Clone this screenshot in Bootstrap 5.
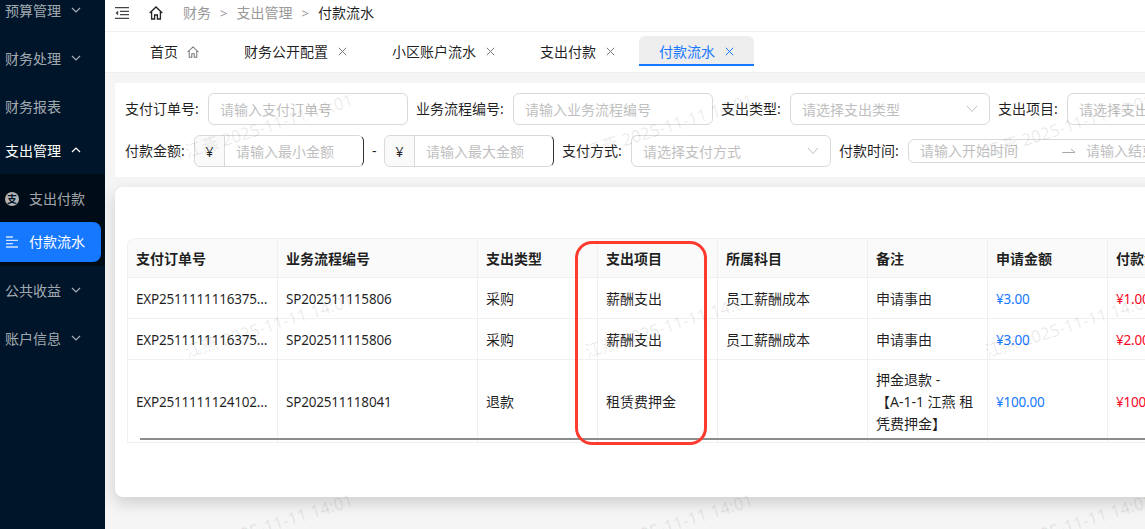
<!DOCTYPE html>
<html lang="zh-CN">
<head>
<meta charset="utf-8">
<title>付款流水</title>
<link href="https://cdn.jsdelivr.net/npm/bootstrap@5.3.0/dist/css/bootstrap.min.css" rel="stylesheet">
<style>
html,body{height:100%;overflow:hidden}
body{font-family:"Noto Sans","Noto Sans CJK SC",sans-serif;font-size:14px;line-height:22px;color:rgba(0,0,0,.88);background:#f5f5f5}
.shell{height:529px;width:1145px;overflow:hidden}
.side{width:105px;background:#001529;color:rgba(255,255,255,.65);overflow:hidden}
.side-first{margin-top:-14px}
.side-item{height:48px;padding:2px 24px 0 5px}
.side-item.open{height:44px;color:#fff;padding-top:0;padding-bottom:2px}
.side-item svg{width:10px;height:6px;flex:none;margin-bottom:3px}
.side-sub{background:#000c17;padding:5px 4px 4px 0;height:92px}
.sub-item{height:40px;padding-left:5px;gap:10px;margin-bottom:3px;border-radius:0 8px 8px 0}
.sub-item.on{background:#1677ff;color:#fff;margin-bottom:0}
.sub-icon{width:14px;height:14px;border-radius:50%;background:#b5b5b5;color:#001529;font-size:10px;line-height:14px;text-align:center;flex:none;font-weight:700}
.main-col{min-width:0;position:relative;overflow:hidden}
.topbar{height:32px;background:#fff;border-bottom:1px solid #f0f0f0;padding:0 0 6px 10px}
.crumb-home{margin-left:20px;margin-right:20px}
.crumb{color:#999}
.crumb-sep{color:#999;width:25.5px;text-align:center;font-size:13px}
.crumb-now{color:rgba(0,0,0,.88)}
.tabbar{height:41px;background:#fff;border-bottom:1px solid #eee;padding-left:25px;padding-top:4px;gap:5px;flex-wrap:nowrap}
.tab-link{height:30px;padding:3px 20px 0;color:rgba(0,0,0,.88);border-radius:6px 6px 0 0;border-bottom:2px solid transparent;white-space:nowrap}
.tab-link:hover{color:rgba(0,0,0,.88)}
.tab-link.current,.tab-link.current:hover{background:#eee;color:#1677ff;border-bottom-color:#1677ff;margin-left:-1px}
.tab-link svg{margin-left:10px;flex:none}
.tab-link svg.home-mini{margin-left:9px}
.pane{padding:10px 0 0 10px;width:1240px}
.filters{background:#fff;padding:10px;height:94px;gap:10px;margin-bottom:10px}
.f-row{gap:8px;height:32px;flex-wrap:nowrap}
.f-label{white-space:nowrap;flex:none}
.w-l4{width:61px}.w-l5{width:75px}.w-l6{width:89px}
.filters .form-control,.filters .form-select,.filters .input-group-text{font-size:14px;height:32px;border-color:#d9d9d9;border-radius:6px;min-height:0;color:rgba(0,0,0,.88);box-shadow:none}
.filters .form-control::placeholder{color:#bfbfbf}
.f-w200{width:200px;flex:none}
.filters .form-control{padding:4px 11px}
.filters .form-select{color:#bfbfbf;padding:4px 11px;background-size:12px 8px;background-position:right 11px center;background-image:url("data:image/svg+xml,%3csvg xmlns='http://www.w3.org/2000/svg' viewBox='0 0 12 8'%3e%3cpath fill='none' stroke='%23bfbfbf' d='M1 1l5 5.5L11 1'/%3e%3c/svg%3e")}
.filters .input-group{width:170px;flex:none;flex-wrap:nowrap}
.filters .input-group-text{width:31px;padding:0;justify-content:center;background:#fafafa;border-radius:6px 0 0 6px}
.filters .input-group .form-control{border-right-color:#333;border-radius:0 6px 6px 0;min-width:0}
.dash{width:4px;text-align:center;flex:none}
.range{width:300px;flex:none;border:1px solid #d9d9d9;border-radius:6px;padding:0 11px;gap:10px}
.range input{border:0;outline:0;padding:0;width:132px;font-size:14px;background:transparent}
.range input::placeholder{color:#bfbfbf}
.sheet{position:relative;background:#fff;height:310px;border-radius:8px;border:0;box-shadow:0 6px 16px rgba(0,0,0,.16);padding:51px 0 0 12px}
.grid-wrap{position:relative;height:205px;overflow:hidden;border:1px solid #f0f0f0;border-right:0;border-top-left-radius:8px}
.pay-table{table-layout:fixed;width:1100px;margin:0;border-collapse:separate;border-spacing:0}
.pay-table th,.pay-table td{padding:0 8px;border:0;border-right:1px solid #f0f0f0;border-bottom:1px solid #f0f0f0;vertical-align:middle;font-size:14px;line-height:22px;color:rgba(0,0,0,.88);box-shadow:none}
.pay-table th{background:#fafafa;font-weight:700;height:39px;padding-top:1px}
.pay-table .row-s td{height:41px;padding-top:1px}
.pay-table .row-l td{height:85px}
.pay-table td.latin{font-size:13.5px;letter-spacing:-.2px}
.amt-b{color:#1677ff!important}
.amt-r{color:#f5071f!important}
.scroll-line{position:absolute;left:12px;right:0;top:199px;height:2px;background:#8c8c8c}
.red-mark{position:absolute;left:460px;top:54px;width:132px;height:204px;border:3px solid #ff3b30;border-radius:17px;pointer-events:none}
.wm-layer{position:absolute;left:-36px;top:26px;display:grid;grid-template-columns:repeat(3,400px);grid-auto-rows:200px;pointer-events:none;z-index:5}
.wm-layer span{display:flex;align-items:center;justify-content:center;color:rgba(0,0,0,.09);font-size:17px;transform:rotate(-17.5deg);white-space:nowrap}
</style>
</head>
<body>
<div class="shell d-flex">
  <aside class="side flex-shrink-0">
    <div class="side-item side-first d-flex align-items-center justify-content-between">预算管理<svg viewBox="0 0 10 6"><path d="M1 1l4 4 4-4" fill="none" stroke="currentColor" stroke-width="1.2"/></svg></div>
    <div class="side-item d-flex align-items-center justify-content-between">财务处理<svg viewBox="0 0 10 6"><path d="M1 1l4 4 4-4" fill="none" stroke="currentColor" stroke-width="1.2"/></svg></div>
    <div class="side-item d-flex align-items-center">财务报表</div>
    <div class="side-item open d-flex align-items-center justify-content-between">支出管理<svg viewBox="0 0 10 6"><path d="M1 5l4-4 4 4" fill="none" stroke="currentColor" stroke-width="1.2"/></svg></div>
    <div class="side-sub">
      <div class="sub-item d-flex align-items-center"><span class="sub-icon">支</span>支出付款</div>
      <div class="sub-item on d-flex align-items-center"><svg width="14" height="12" viewBox="0 0 14 12" class="flex-shrink-0"><path d="M1 1h7M1 4.3h12M1 7.6h7M1 11h12" stroke="#cfe2ff" stroke-width="1.3" fill="none"/></svg>付款流水</div>
    </div>
    <div class="side-item d-flex align-items-center justify-content-between">公共收益<svg viewBox="0 0 10 6"><path d="M1 1l4 4 4-4" fill="none" stroke="currentColor" stroke-width="1.2"/></svg></div>
    <div class="side-item d-flex align-items-center justify-content-between">账户信息<svg viewBox="0 0 10 6"><path d="M1 1l4 4 4-4" fill="none" stroke="currentColor" stroke-width="1.2"/></svg></div>
  </aside>
  <main class="main-col flex-grow-1">
    <div class="topbar d-flex align-items-center">
      <svg width="14" height="12" viewBox="0 0 14 12"><path d="M0 .7h14M5 4.3h9M5 7.7h9M0 11.3h14" stroke="#444" stroke-width="1.2" fill="none"/><path d="M3.2 3.6L.6 6l2.6 2.4z" fill="#444"/></svg>
      <svg class="crumb-home" width="14" height="14" viewBox="0 0 14 14"><path d="M.7 7L7 1l6.3 6M2.6 5.6V13h3V9h2.8v4h3V5.6" fill="none" stroke="#222" stroke-width="1.3"/></svg>
      <span class="crumb">财务</span><span class="crumb-sep">&gt;</span><span class="crumb">支出管理</span><span class="crumb-sep">&gt;</span><span class="crumb-now">付款流水</span>
    </div>
    <nav class="nav tabbar align-items-start">
      <a class="nav-link tab-link d-flex align-items-center" href="#">首页<svg class="home-mini" width="12" height="12" viewBox="0 0 14 14"><path d="M.7 7L7 1l6.3 6M2.6 5.6V13h3V9h2.8v4h3V5.6" fill="none" stroke="#777" stroke-width="1.2"/></svg></a>
      <a class="nav-link tab-link d-flex align-items-center" href="#">财务公开配置<svg width="9" height="9" viewBox="0 0 9 9"><path d="M.8.8l7.4 7.4M8.2.8L.8 8.2" stroke="#777" fill="none"/></svg></a>
      <a class="nav-link tab-link d-flex align-items-center" href="#">小区账户流水<svg width="9" height="9" viewBox="0 0 9 9"><path d="M.8.8l7.4 7.4M8.2.8L.8 8.2" stroke="#777" fill="none"/></svg></a>
      <a class="nav-link tab-link d-flex align-items-center" href="#">支出付款<svg width="9" height="9" viewBox="0 0 9 9"><path d="M.8.8l7.4 7.4M8.2.8L.8 8.2" stroke="#777" fill="none"/></svg></a>
      <a class="nav-link tab-link current d-flex align-items-center" href="#">付款流水<svg width="9" height="9" viewBox="0 0 9 9"><path d="M.8.8l7.4 7.4M8.2.8L.8 8.2" stroke="#1677ff" fill="none"/></svg></a>
    </nav>
    <div class="pane">
      <div class="filters d-flex flex-column">
        <div class="f-row d-flex align-items-center">
          <label class="f-label w-l5">支付订单号:</label>
          <input class="form-control f-w200" placeholder="请输入支付订单号">
          <label class="f-label w-l6">业务流程编号:</label>
          <input class="form-control f-w200" placeholder="请输入业务流程编号">
          <label class="f-label w-l4">支出类型:</label>
          <select class="form-select f-w200"><option>请选择支出类型</option></select>
          <label class="f-label w-l4">支出项目:</label>
          <select class="form-select f-w200"><option>请选择支出项目</option></select>
        </div>
        <div class="f-row d-flex align-items-center">
          <label class="f-label w-l4">付款金额:</label>
          <div class="input-group"><span class="input-group-text">¥</span><input class="form-control" placeholder="请输入最小金额"></div>
          <span class="dash">-</span>
          <div class="input-group"><span class="input-group-text">¥</span><input class="form-control" placeholder="请输入最大金额"></div>
          <label class="f-label w-l4">支付方式:</label>
          <select class="form-select f-w200"><option>请选择支付方式</option></select>
          <label class="f-label w-l4">付款时间:</label>
          <div class="range d-flex align-items-center">
            <input placeholder="请输入开始时间">
            <svg width="14" height="6" viewBox="0 0 14 6" class="flex-shrink-0"><path d="M0 4.5h13L9 1" stroke="#aaa" fill="none"/></svg>
            <input placeholder="请输入结束时间">
          </div>
        </div>
      </div>
      <section class="sheet">
        <div class="grid-wrap">
          <table class="table pay-table">
            <colgroup><col style="width:150px"><col style="width:200px"><col style="width:120px"><col style="width:120px"><col style="width:150px"><col style="width:120px"><col style="width:120px"><col style="width:120px"></colgroup>
            <thead><tr><th>支付订单号</th><th>业务流程编号</th><th>支出类型</th><th>支出项目</th><th>所属科目</th><th>备注</th><th>申请金额</th><th>付款金额</th></tr></thead>
            <tbody>
              <tr class="row-s"><td class="latin text-truncate">EXP25111111163751234</td><td class="latin">SP202511115806</td><td>采购</td><td>薪酬支出</td><td>员工薪酬成本</td><td>申请事由</td><td class="latin amt-b">¥3.00</td><td class="latin amt-r">¥1.00</td></tr>
              <tr class="row-s"><td class="latin text-truncate">EXP25111111163755678</td><td class="latin">SP202511115806</td><td>采购</td><td>薪酬支出</td><td>员工薪酬成本</td><td>申请事由</td><td class="latin amt-b">¥3.00</td><td class="latin amt-r">¥2.00</td></tr>
              <tr class="row-l"><td class="latin text-truncate">EXP25111111241029876</td><td class="latin">SP202511118041</td><td>退款</td><td>租赁费押金</td><td></td><td>押金退款 -<br>【A-1-1 江燕 租凭费押金】</td><td class="latin amt-b">¥100.00</td><td class="latin amt-r">¥100.00</td></tr>
            </tbody>
          </table>
          <div class="scroll-line"></div>
        </div>
        <div class="red-mark"></div>
      </section>
    </div>
    <div class="wm-layer">
      <span>江燕 2025-11-11 14:01</span><span>江燕 2025-11-11 14:01</span><span>江燕 2025-11-11 14:01</span>
      <span>江燕 2025-11-11 14:01</span><span>江燕 2025-11-11 14:01</span><span>江燕 2025-11-11 14:01</span>
      <span>江燕 2025-11-11 14:01</span><span>江燕 2025-11-11 14:01</span><span>江燕 2025-11-11 14:01</span>
    </div>
  </main>
</div>
<script src="https://cdn.jsdelivr.net/npm/bootstrap@5.3.0/dist/js/bootstrap.bundle.min.js"></script>
</body>
</html>
